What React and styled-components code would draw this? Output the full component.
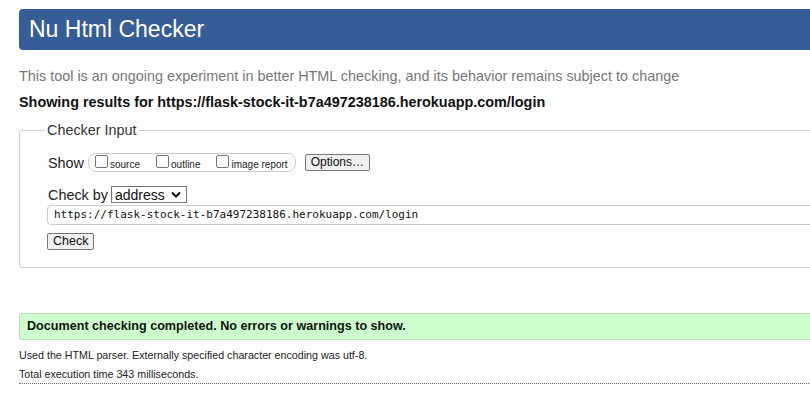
import React from "react";
import styled, { createGlobalStyle } from "styled-components";

const GlobalStyle = createGlobalStyle`
  html, body {
    margin: 0;
    padding: 0;
    overflow: hidden;
    background: #fff;
  }
  body {
    font-family: "Liberation Sans", Arial, sans-serif;
    color: #000;
  }
`;

const Page = styled.div`
  width: 840px;
  padding: 9px 0 0 19px;
`;

const Header = styled.h1`
  margin: 0;
  height: 41px;
  line-height: 41px;
  padding-left: 10px;
  background-color: #365d95;
  border-radius: 4px;
  color: #fff;
  font-size: 23px;
  font-weight: normal;
`;

const Intro = styled.p`
  margin: 17px 0 0;
  font-size: 14.4px;
  line-height: 18px;
  color: #777;
`;

const Results = styled.p`
  margin: 8px 0 0;
  font-size: 14.4px;
  line-height: 18px;
  font-weight: bold;
  color: #111;
`;

const Fieldset = styled.fieldset`
  margin: 11px 0 0;
  padding: 15px 0 16px 28px;
  border: 1px solid #d0d0d0;
  border-radius: 3px;
  height: 113px;
`;

const Legend = styled.legend`
  margin-left: -3px;
  padding: 0 2px;
  font-size: 14.4px;
  color: #333;
`;

const Row = styled.div`
  display: flex;
  align-items: center;
  margin-top: ${(p) => p.$top || 0}px;
  font-size: 14.4px;
  color: #222;
`;

const Pill = styled.div`
  display: flex;
  align-items: center;
  height: 17px;
  margin-left: 4px;
  padding: 0 7px 0 6px;
  border: 1px solid #ccc;
  border-radius: 8px;
  gap: 16px;
`;

const Option = styled.label`
  display: flex;
  align-items: flex-end;
  font-size: 10px;
  color: #222;
`;

const Box = styled.span`
  display: inline-block;
  width: 11px;
  height: 11px;
  border: 1px solid #767676;
  border-radius: 2px;
  margin-right: 2px;
  margin-bottom: 2px;
  background: #fff;
`;

const Button = styled.button`
  height: 17px;
  padding: 0 5px;
  margin-left: ${(p) => p.$left || 0}px;
  font-family: "Liberation Sans", Arial, sans-serif;
  font-size: ${(p) => p.$size || 13}px;
  line-height: 15px;
  color: #111;
  background: #efefef;
  border: 1px solid #767676;
  border-radius: 2px;
`;

const Select = styled.div`
  display: flex;
  align-items: center;
  justify-content: space-between;
  box-sizing: border-box;
  width: 76px;
  height: 17px;
  margin-left: 3px;
  padding: 0 5px 0 3px;
  border: 1px solid #767676;
  font-size: 14px;
  color: #111;
  background: #fff;
`;

const UrlInput = styled.div`
  box-sizing: border-box;
  height: 20px;
  margin: 2px 0 0 -1px;
  padding-left: 6px;
  border: 1px solid #ccc;
  border-radius: 4px;
  font-family: "DejaVu Sans Mono", "Liberation Mono", monospace;
  font-size: 11px;
  line-height: 18px;
  color: #111;
`;

const Success = styled.div`
  margin-top: 45px;
  height: 25px;
  line-height: 25px;
  padding-left: 7px;
  background: #ccffcc;
  border: 1px solid #bcd9bc;
  border-right: none;
  border-radius: 3px 0 0 3px;
  font-size: 12.6px;
  font-weight: bold;
  color: #111;
`;

const Note = styled.p`
  margin: ${(p) => p.$top || 0}px 0 0;
  font-size: 10.7px;
  line-height: 13px;
  color: #222;
`;

const Rule = styled.hr`
  margin: 2px 0 0;
  border: none;
  border-top: 1px dotted #666;
`;

const Chevron = () => (
  <svg width="10" height="7" viewBox="0 0 10 7">
    <path d="M1 1.5 L5 5.5 L9 1.5" fill="none" stroke="#111" strokeWidth="2" />
  </svg>
);

const options = ["source", "outline", "image report"];

const App = () => {
  return (
    <>
      <GlobalStyle />
      <Page>
        <Header>Nu Html Checker</Header>
        <Intro>
          This tool is an ongoing experiment in better HTML checking, and its behavior remains subject to change
        </Intro>
        <Results>Showing results for https://flask-stock-it-b7a497238186.herokuapp.com/login</Results>
        <Fieldset>
          <Legend>Checker Input</Legend>
          <Row>
            Show
            <Pill>
              {options.map((o) => (
                <Option key={o}>
                  <Box />
                  {o}
                </Option>
              ))}
            </Pill>
            <Button $left={9} $size={12}>Options…</Button>
          </Row>
          <Row $top={14}>
            Check by
            <Select>
              address
              <Chevron />
            </Select>
          </Row>
          <UrlInput>https://flask-stock-it-b7a497238186.herokuapp.com/login</UrlInput>
          <Row $top={8}>
            <Button $left={-1} $size={12.5}>Check</Button>
          </Row>
        </Fieldset>
        <Success>Document checking completed. No errors or warnings to show.</Success>
        <Note $top={9}>Used the HTML parser. Externally specified character encoding was utf-8.</Note>
        <Note $top={6}>Total execution time 343 milliseconds.</Note>
        <Rule />
      </Page>
    </>
  );
};

export default App;
